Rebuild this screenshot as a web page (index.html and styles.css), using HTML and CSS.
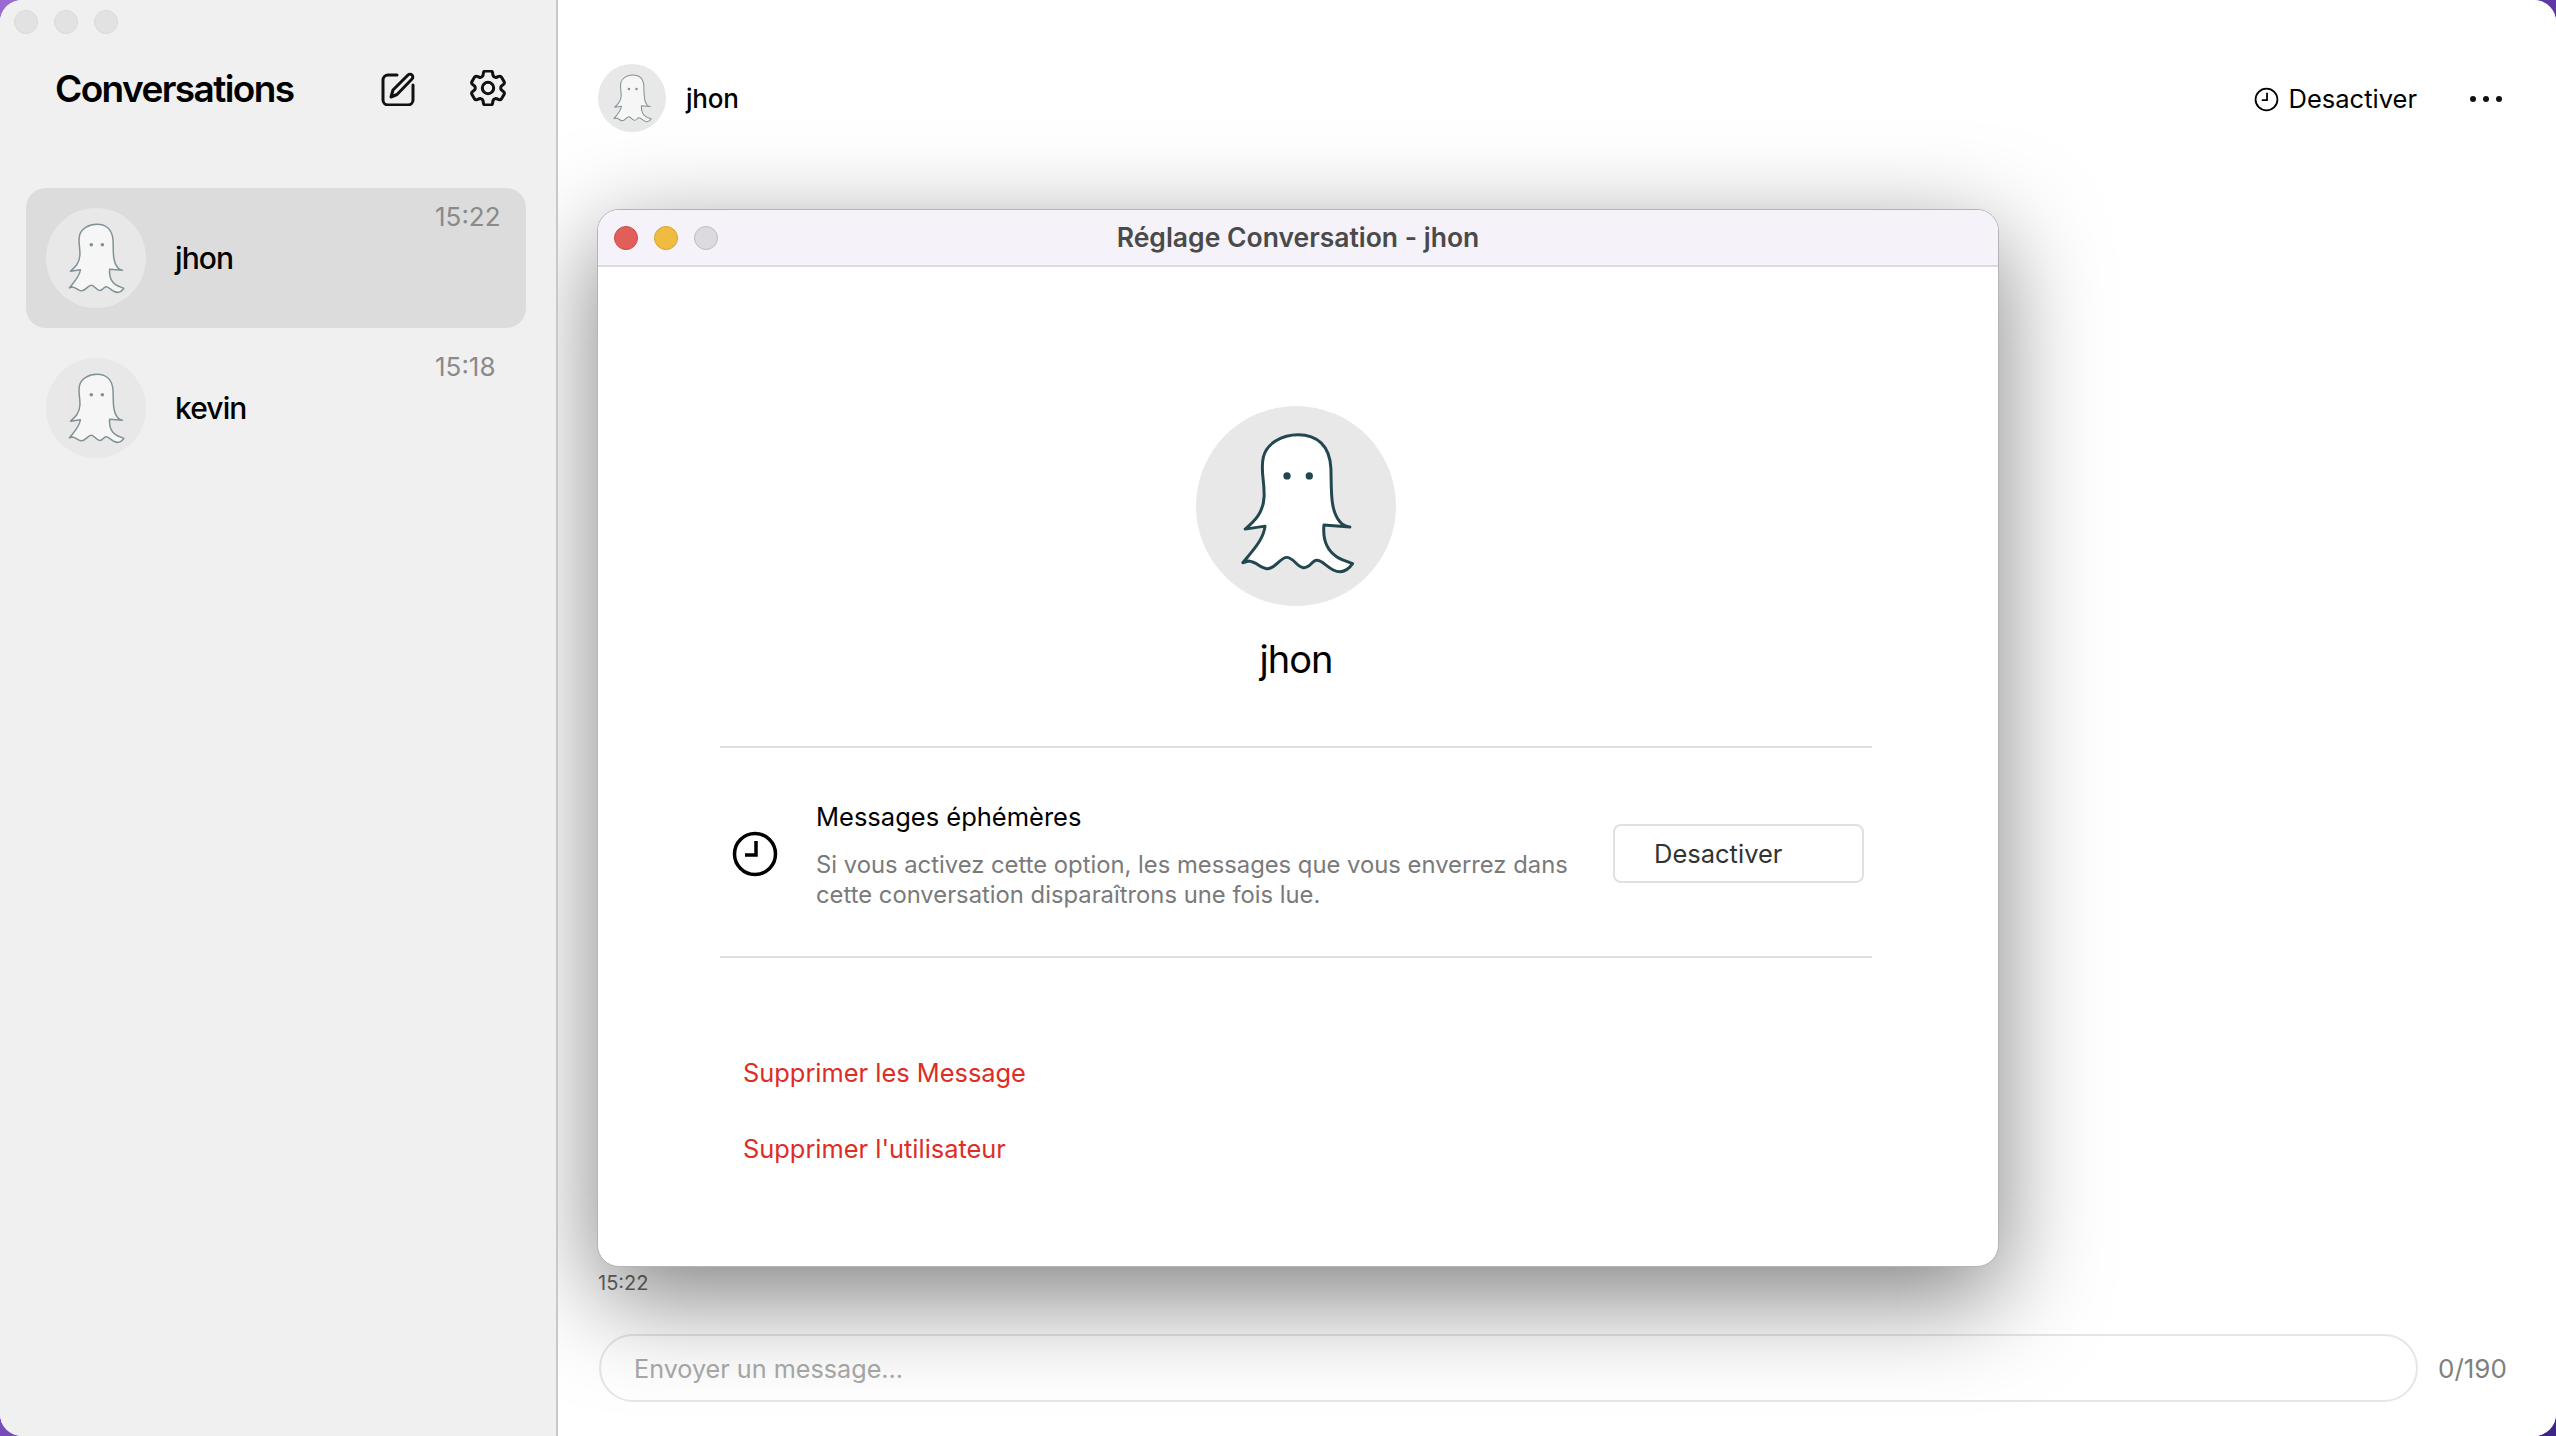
FILE: index.html
```html
<!DOCTYPE html>
<html lang="fr">
<head>
<meta charset="utf-8">
<title>Conversations</title>
<link rel="stylesheet" href="styles.css">
</head>
<body>
<svg class="defs" width="0" height="0" aria-hidden="true">
  <symbol id="ghost" viewBox="420 155 345 430">
    <path class="ghost-body" d="M595 163C650 163 690 195 693 265C695 330 690 390 720 425C730 437 740 440 750 441L672 435C668 480 680 510 710 530C725 540 745 545 758 551C745 570 725 582 700 570C680 560 665 540 650 541C635 542 630 565 610 563C590 560 580 532 560 532C540 532 525 568 500 566C480 564 470 545 445 543L428 548C455 515 490 480 495 438L435 447C460 425 490 400 492 350C494 300 480 270 490 230C500 190 545 163 595 163Z"/>
    <circle class="ghost-eye" cx="561" cy="287" r="11"/>
    <circle class="ghost-eye" cx="628" cy="287" r="11"/>
  </symbol>
</svg>
<div class="window">
  <aside class="sidebar">
    <div class="lights">
      <span class="light"></span><span class="light"></span><span class="light"></span>
    </div>
    <header class="side-head">
      <h1 class="side-title">Conversations</h1>
      <svg class="icon-edit" viewBox="0 0 36 36" fill="none" stroke="currentColor" stroke-width="3" stroke-linecap="round" stroke-linejoin="round">
        <path d="M17 6H8a5 5 0 0 0-5 5v20a5 5 0 0 0 5 5h20a5 5 0 0 0 5-5V16" transform="translate(0 -1)"/>
        <path d="M11 27l2-7L28 5a2.800 2.800 0 0 1 4 4L17 24.500z"/>
      </svg>
      <svg class="icon-gear" viewBox="2.500 2.500 19 19" fill="none" stroke="currentColor" stroke-width="1.600" stroke-linecap="round" stroke-linejoin="round">
        <path d="M9.594 3.940c.09-.542.56-.94 1.110-.94h2.593c.55 0 1.020.398 1.110.94l.213 1.281c.063.374.313.686.645.87.074.04.147.083.22.127.325.196.72.257 1.075.124l1.217-.456a1.125 1.125 0 0 1 1.370.49l1.296 2.247a1.125 1.125 0 0 1-.26 1.431l-1.003.827c-.293.241-.438.613-.43.992a7.723 7.723 0 0 1 0 .255c-.008.378.137.75.43.991l1.004.827c.424.35.534.955.26 1.430l-1.298 2.247a1.125 1.125 0 0 1-1.369.491l-1.217-.456c-.355-.133-.75-.072-1.076.124a6.470 6.470 0 0 1-.22.128c-.331.183-.581.495-.644.869l-.213 1.281c-.09.543-.56.94-1.110.94h-2.594c-.55 0-1.019-.398-1.110-.94l-.213-1.281c-.062-.374-.312-.686-.644-.87a6.520 6.520 0 0 1-.22-.127c-.325-.196-.72-.257-1.076-.124l-1.217.456a1.125 1.125 0 0 1-1.369-.49l-1.297-2.247a1.125 1.125 0 0 1 .26-1.431l1.004-.827c.292-.24.437-.613.43-.991a6.932 6.932 0 0 1 0-.255c.007-.38-.138-.751-.43-.992l-1.004-.827a1.125 1.125 0 0 1-.26-1.430l1.297-2.247a1.125 1.125 0 0 1 1.370-.491l1.216.456c.356.133.751.072 1.076-.124.072-.044.146-.086.22-.128.332-.183.582-.495.644-.869l.214-1.280Z"/>
        <circle cx="12" cy="12" r="3"/>
      </svg>
    </header>
    <ul class="conv-list">
      <li class="conv conv-active">
        <span class="avatar avatar-md"><svg class="ghost-soft"><use href="#ghost"/></svg></span>
        <span class="conv-name">jhon</span>
        <span class="conv-time">15:22</span>
      </li>
      <li class="conv">
        <span class="avatar avatar-md"><svg class="ghost-soft"><use href="#ghost"/></svg></span>
        <span class="conv-name">kevin</span>
        <span class="conv-time">15:18</span>
      </li>
    </ul>
  </aside>

  <main class="main">
    <header class="chat-head">
      <span class="avatar avatar-sm"><svg class="ghost-soft"><use href="#ghost"/></svg></span>
      <span class="chat-name">jhon</span>
      <span class="chat-timer">
        <svg class="icon-clock-sm" viewBox="0 0 24 24" fill="none" stroke="currentColor" stroke-width="1.700"><circle cx="12" cy="12" r="10.500"/><path d="M12.500 5.500v7H7.500"/></svg>
        Desactiver
      </span>
      <span class="more"><i></i><i></i><i></i></span>
    </header>

    <div class="chat-body">
      <time class="msg-time">15:22</time>
    </div>

    <div class="composer">
      <div class="composer-input">Envoyer un message...</div>
      <span class="counter">0/190</span>
    </div>

    <section class="dialog">
      <div class="dialog-bar">
        <span class="dialog-lights">
          <span class="dlight dlight-close"></span>
          <span class="dlight dlight-min"></span>
          <span class="dlight dlight-max"></span>
        </span>
        <span class="dialog-title">Réglage Conversation - jhon</span>
      </div>
      <div class="dialog-body">
        <div class="profile">
          <span class="avatar avatar-lg"><svg class="ghost-strong"><use href="#ghost"/></svg></span>
          <h2 class="profile-name">jhon</h2>
        </div>
        <div class="setting">
          <svg class="icon-clock-lg" viewBox="0 0 46 46" fill="none" stroke="currentColor" stroke-width="3.500"><circle cx="23" cy="23" r="20.500"/><path d="M24 10v14H13"/></svg>
          <div class="setting-text">
            <h3 class="setting-title">Messages éphémères</h3>
            <p class="setting-desc">Si vous activez cette option, les messages que vous enverrez dans<br>cette conversation disparaîtrons une fois lue.</p>
          </div>
          <button class="setting-btn" type="button">Desactiver</button>
        </div>
        <div class="danger">
          <a class="danger-link">Supprimer les Message</a>
          <a class="danger-link">Supprimer l'utilisateur</a>
        </div>
      </div>
    </section>
  </main>
</div>
</body>
</html>
```
FILE: styles.css
```css
* { box-sizing: border-box; }
html, body { margin: 0; padding: 0; height: 100%; }
html { background: linear-gradient(135deg, #9a6ad2 0%, #6a3fb0 50%, #3f2585 100%); }
body { font-family: Inter, "Liberation Sans", sans-serif; color: #000; overflow: hidden; }
.defs { position: absolute; }

.window { display: flex; height: 1436px; border-radius: 22px; overflow: hidden; background: #fff; }

/* sidebar */
.sidebar { flex: 0 0 558px; background: #f0f0f0; border-right: 2px solid #c8c8c8; position: relative; z-index: 2; }
.lights { display: flex; gap: 16px; padding: 10px 0 0 14px; height: 62px; }
.light { width: 24px; height: 24px; border-radius: 50%; background: #e2e2e2; border: 1px solid #d9d9d9; }
.side-head { display: flex; align-items: center; height: 52px; padding-left: 55px; }
.side-title { margin: 0; width: 325px; font-size: 37px; font-weight: 600; letter-spacing: -1.600px; }
.icon-edit { width: 36px; height: 36px; color: #111; margin-top: -1px; }
.icon-gear { width: 36px; height: 36px; color: #111; margin-left: 54px; margin-top: -1px; }
.conv-list { list-style: none; margin: 74px 0 0; padding: 0 0 0 26px; display: flex; flex-direction: column; gap: 10px; width: 526px; }
.conv { display: flex; align-items: center; height: 140px; padding-left: 20px; border-radius: 20px; }
.conv-active { background: #dcdcdc; }
.conv-name { flex: 1; margin-left: 29px; font-size: 30px; font-weight: 500; letter-spacing: -.9px; }
.conv-time { align-self: flex-start; width: 91px; margin-top: 14px; font-size: 26px; line-height: 30px; color: #8a8a8a; }

/* avatars */
.avatar { display: flex; align-items: center; justify-content: center; flex: none; border-radius: 50%; background: #e8e8e8; }
.avatar-md { width: 100px; height: 100px; }
.avatar-md svg { width: 57px; height: 71px; }
.avatar-sm { width: 68px; height: 68px; }
.avatar-sm svg { width: 39px; height: 49px; }
.avatar-lg { width: 200px; height: 200px; }
.avatar-lg svg { width: 115px; height: 143px; margin: -6px 0 0 3px; }
.ghost-body { stroke-width: 9; stroke-linejoin: round; }
.ghost-eye { stroke: none; fill: var(--eye); }
.ghost-soft { fill: #f6f6f6; stroke: #7f9195; --eye: #7f9195; }
.ghost-strong { fill: #fff; stroke: #23474f; --eye: #23474f; }

/* main column */
.main { flex: 1; display: flex; flex-direction: column; position: relative; overflow: hidden; background: #fff; }
.chat-head { display: flex; align-items: flex-start; flex: none; height: 196px; padding: 64px 0 0 40px; }
.chat-name { flex: 1; margin-left: 20px; font-size: 26px; font-weight: 500; line-height: 70px; letter-spacing: -.2px; }
.chat-timer { display: flex; align-items: center; gap: 10px; margin-right: 53px; font-size: 25.500px; line-height: 70px; }
.icon-clock-sm { width: 25px; height: 25px; }
.more { display: flex; align-items: center; gap: 7px; height: 70px; margin-right: 54px; }
.more i { width: 6px; height: 6px; border-radius: 50%; background: #111; }
.chat-body { flex: 1; display: flex; flex-direction: column; justify-content: flex-end; padding-left: 40px; }
.msg-time { margin-bottom: 39px; font-size: 20px; line-height: 24px; color: #6a6a6a; }
.composer { display: flex; align-items: center; flex: none; padding: 0 0 34px 41px; }
.composer-input { width: 1819px; height: 68px; padding-left: 33px; border: 2px solid #e6e6e6; border-radius: 34px; font-size: 25.200px; line-height: 67px; color: #aaa; }
.counter { margin-left: 20px; font-size: 26px; color: #808080; }

/* dialog */
.dialog { position: absolute; left: 39px; top: 209px; width: 1402px; height: 1058px; display: flex; flex-direction: column; overflow: hidden; background: #fff; border: 1px solid #b4b4b4; border-radius: 22px; box-shadow: 0 30px 100px rgba(0, 0, 0, .5); }
.dialog-bar { position: relative; display: flex; align-items: center; justify-content: center; flex: none; height: 57px; background: #f5f3f9; border-bottom: 2px solid #dcdae0; }
.dialog-lights { position: absolute; left: 16px; top: 16px; display: flex; gap: 16px; }
.dlight { width: 24px; height: 24px; border-radius: 50%; border: 1px solid; }
.dlight-close { background: #e25e5b; border-color: #cf4b48; }
.dlight-min { background: #f0bb41; border-color: #d9a22f; }
.dlight-max { background: #dcdadf; border-color: #bdbbc0; }
.dialog-title { margin-top: -2px; font-size: 26.500px; font-weight: 600; color: #4a4a4a; }
.dialog-body { flex: 1; display: flex; flex-direction: column; padding: 0 126px 0 122px; }
.profile { display: flex; flex-direction: column; align-items: center; height: 481px; padding-top: 139px; border-bottom: 2px solid #e0e0e0; }
.profile-name { margin: 23px 0 0; font-size: 38px; line-height: 60px; font-weight: 400; letter-spacing: -1px; }
.setting { display: flex; align-items: center; height: 210px; padding: 0 8px 0 12px; border-bottom: 2px solid #e0e0e0; }
.icon-clock-lg { flex: none; width: 46px; height: 46px; margin-top: 3px; }
.setting-text { flex: 1; margin-left: 38px; padding-top: 4px; }
.setting-title { margin: 0 0 15px; font-size: 25.500px; line-height: 36px; font-weight: 400; }
.setting-desc { margin: 0; font-size: 23.800px; line-height: 30px; color: #7a7a7a; }
.setting-btn { flex: none; width: 251px; height: 59px; margin-top: 3px; padding: 0 0 0 39px; background: #fff; border: 2px solid #e0e0e0; border-radius: 8px; text-align: left; font: 400 25.500px Inter, "Liberation Sans", sans-serif; color: #333; }
.danger { display: flex; flex-direction: column; gap: 40px; padding: 97px 0 0 23px; }
.danger-link { font-size: 25.400px; line-height: 36px; color: #de2c26; }
```
